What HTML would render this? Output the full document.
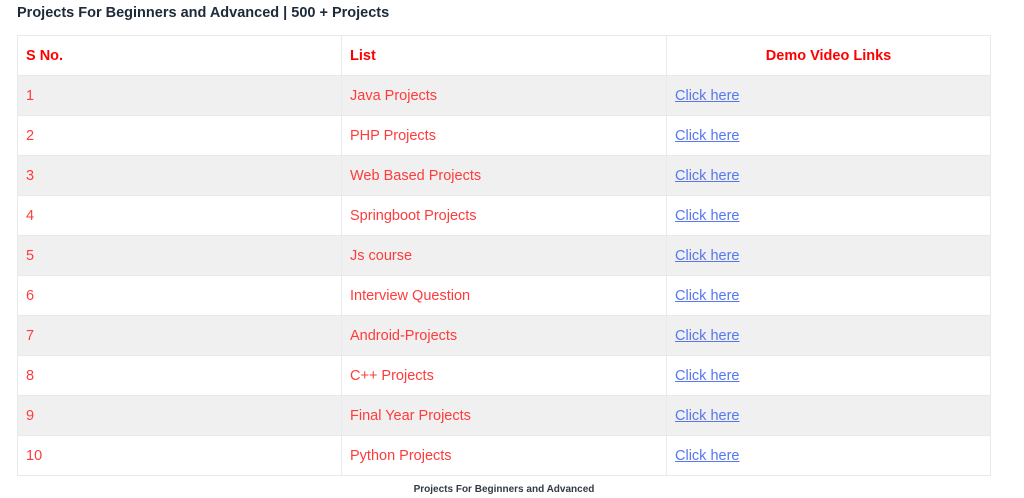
<!DOCTYPE html>
<html><head><meta charset="utf-8"><style>
body{margin:0;background:#fff;width:1024px;height:498px;overflow:hidden;font-family:"Liberation Sans",sans-serif;}
h1{position:absolute;left:17px;top:5px;margin:0;font-size:14.5px;font-weight:bold;color:#1d2a3a;}
table{position:absolute;left:17px;top:35px;border-collapse:collapse;width:974px;}
td,th{border:1px solid #e6e9ee;height:38px;padding:1px 8px 0;font-size:14.5px;text-align:left;color:#ff3b3b;font-weight:normal;}
th{color:#ff0000;font-weight:bold;}
th.c{text-align:center;}
tr:nth-child(even) td{background:#f0f0f0;}
td a{color:#5577f0;text-decoration:underline;}
.cap{position:absolute;left:0;width:1008px;top:484px;text-align:center;font-size:10px;font-weight:bold;color:#333a45;}
</style></head><body>
<h1>Projects For Beginners and Advanced | 500 + Projects</h1>
<table>
<tr><th style="width:307px">S No.</th><th style="width:308px">List</th><th class="c">Demo Video Links</th></tr>
<tr><td>1</td><td>Java Projects</td><td><a>Click here</a></td></tr>
<tr><td>2</td><td>PHP Projects</td><td><a>Click here</a></td></tr>
<tr><td>3</td><td>Web Based Projects</td><td><a>Click here</a></td></tr>
<tr><td>4</td><td>Springboot Projects</td><td><a>Click here</a></td></tr>
<tr><td>5</td><td>Js course</td><td><a>Click here</a></td></tr>
<tr><td>6</td><td>Interview Question</td><td><a>Click here</a></td></tr>
<tr><td>7</td><td>Android-Projects</td><td><a>Click here</a></td></tr>
<tr><td>8</td><td>C++ Projects</td><td><a>Click here</a></td></tr>
<tr><td>9</td><td>Final Year Projects</td><td><a>Click here</a></td></tr>
<tr><td>10</td><td>Python Projects</td><td><a>Click here</a></td></tr>
</table>
<div class="cap">Projects For Beginners and Advanced</div>
</body></html>
